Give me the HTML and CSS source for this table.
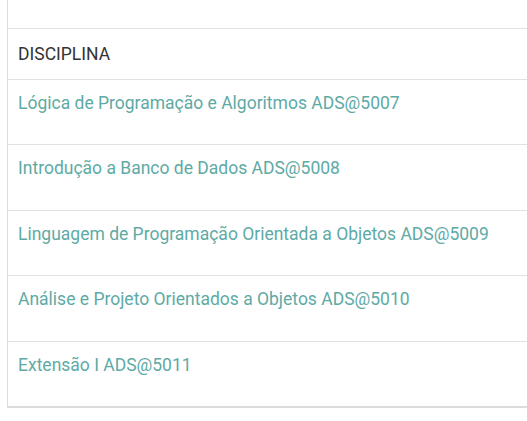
FILE: index.html
```html
<!DOCTYPE html>
<html lang="pt-BR">
<head>
<meta charset="utf-8">
<link rel="stylesheet" href="styles.css">
</head>
<body>
<div class="panel">
  <div class="spacer"></div>
  <table class="grid">
    <thead>
      <tr><th>DISCIPLINA</th></tr>
    </thead>
    <tbody>
      <tr><td><a href="#">Lógica de Programação e Algoritmos ADS@5007</a></td></tr>
      <tr><td><a href="#">Introdução a Banco de Dados ADS@5008</a></td></tr>
      <tr><td><a href="#">Linguagem de Programação Orientada a Objetos ADS@5009</a></td></tr>
      <tr><td><a href="#">Análise e Projeto Orientados a Objetos ADS@5010</a></td></tr>
      <tr><td><a href="#">Extensão I ADS@5011</a></td></tr>
    </tbody>
  </table>
</div>
</body>
</html>
```
FILE: styles.css
```css
html, body {
  margin: 0;
  padding: 0;
  background: #fff;
}
body {
  font-family: Roboto, "Noto Sans", sans-serif;
}
.panel {
  margin-left: 7px;
  width: 540px;
  border-left: 1px solid #dcdcdc;
  border-bottom: 2px solid #dcdcdc;
}
.spacer {
  height: 28px;
  border-bottom: 1px solid #e2e2e2;
}
.grid {
  width: 100%;
  border-collapse: collapse;
}
.grid th {
  text-align: left;
  font-weight: 400;
  font-size: 17.5px;
  color: #333;
  height: 50px;
  padding: 0 10px;
  box-sizing: border-box;
  border-bottom: 1px solid #e2e2e2;
  vertical-align: middle;
}
.grid td {
  height: 65.5px;
  padding: 13px 10px 0;
  box-sizing: border-box;
  vertical-align: top;
  border-bottom: 1px solid #e2e2e2;
  font-size: 17.5px;
}
.grid tbody tr:last-child td {
  border-bottom: none;
  height: 64.5px;
}
.grid a {
  color: #5eaaa5;
  text-decoration: none;
}
```
